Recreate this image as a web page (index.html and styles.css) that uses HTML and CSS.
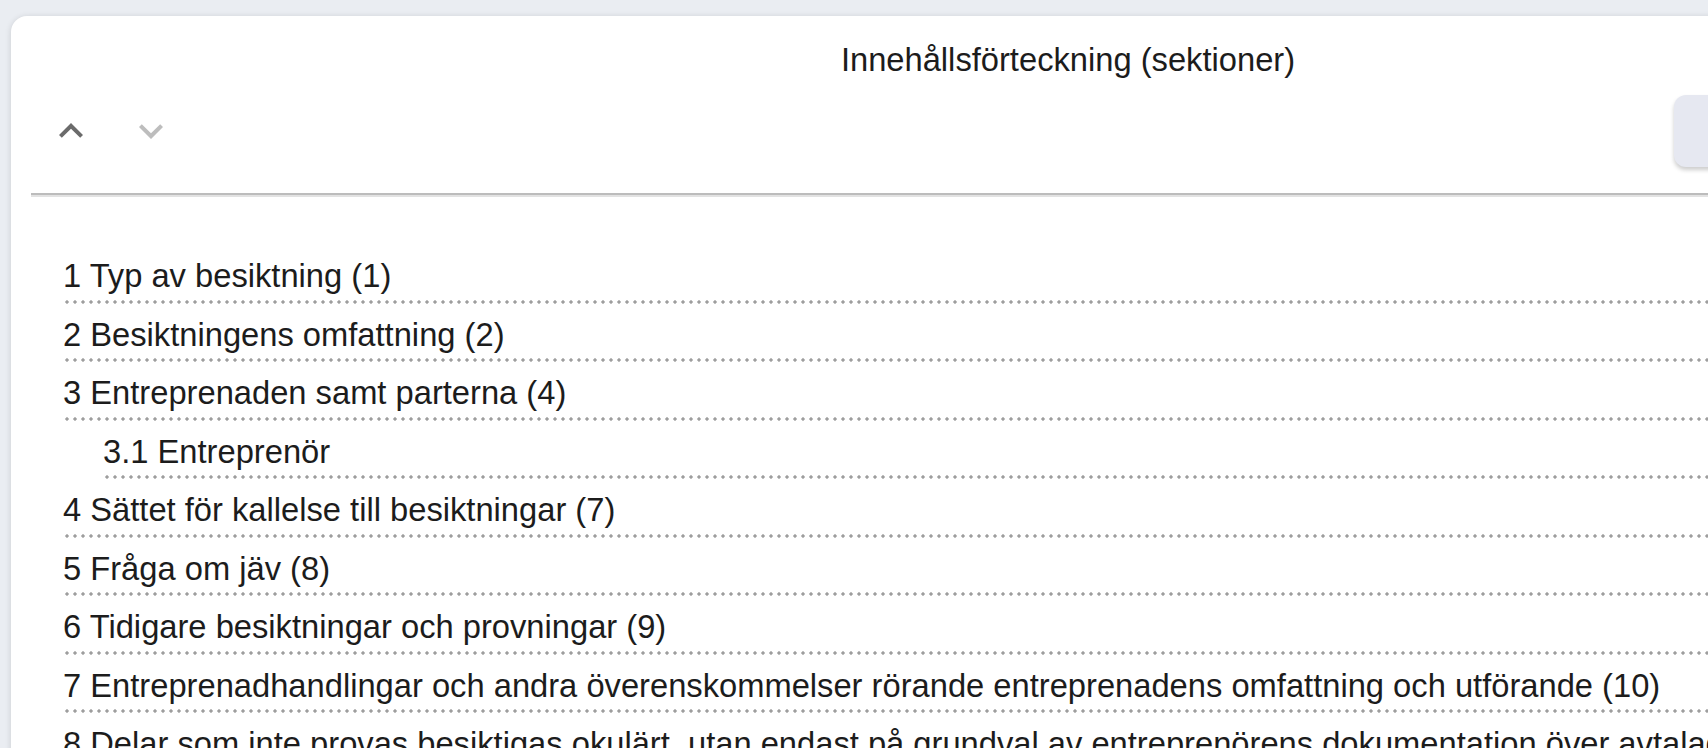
FILE: index.html
```html
<!DOCTYPE html>
<html lang="sv">
<head>
<meta charset="utf-8">
<title>Innehållsförteckning</title>
<link rel="stylesheet" href="styles.css">
</head>
<body>
<div class="card">
  <header class="head">
    <h1 class="title">Innehållsförteckning (sektioner)</h1>
    <div class="toolbar">
      <button class="icon-btn" type="button" aria-label="Upp">
        <svg class="icon up" viewBox="0 0 24 24" width="48" height="48"><path d="M12 8l-6 6 1.41 1.41L12 10.83l4.59 4.58L18 14z"/></svg>
      </button>
      <button class="icon-btn" type="button" aria-label="Ned">
        <svg class="icon down" viewBox="0 0 24 24" width="48" height="48"><path d="M16.59 8.59L12 13.17 7.41 8.59 6 10l6 6 6-6z"/></svg>
      </button>
      <div class="actions">
        <button class="action" type="button"></button>
        <button class="action" type="button"></button>
        <button class="action" type="button"></button>
      </div>
    </div>
  </header>
  <ul class="toc">
    <li class="row">1 Typ av besiktning (1)</li>
    <li class="row">2 Besiktningens omfattning (2)</li>
    <li class="row">3 Entreprenaden samt parterna (4)</li>
    <li class="row sub">3.1 Entreprenör</li>
    <li class="row">4 Sättet för kallelse till besiktningar (7)</li>
    <li class="row">5 Fråga om jäv (8)</li>
    <li class="row">6 Tidigare besiktningar och provningar (9)</li>
    <li class="row">7 Entreprenadhandlingar och andra överenskommelser rörande entreprenadens omfattning och utförande (10)</li>
    <li class="row">8 Delar som inte provas besiktigas okulärt, utan endast på grundval av entreprenörens dokumentation över avtalade kontroller (11)</li>
    <li class="row">9 Besiktningens genomförande (12)</li>
  </ul>
</div>
</body>
</html>
```

FILE: styles.css
```css
html, body {
  margin: 0;
  padding: 0;
  overflow: hidden;
  height: 100%;
}
body {
  background: #eaedf2;
  font-family: "Liberation Sans", Arial, sans-serif;
  color: #1c1c1c;
  padding: 16px 0 0 11px;
  box-sizing: border-box;
}
.card {
  width: 2114px;
  min-height: 900px;
  background: #fff;
  border-radius: 16px;
  box-shadow: 0 1px 6px rgba(0, 0, 0, 0.14);
  padding: 25px 20px 0;
  box-sizing: border-box;
}
.head {
  border-bottom: 2px solid #bcbcbc;
  box-shadow: 0 2px 0 #e2e2e2;
  padding-bottom: 22px;
}
.title {
  margin: 0;
  font-size: 32.7px;
  font-weight: 400;
  line-height: 37px;
  text-align: center;
  color: #1c1c1c;
}
.toolbar {
  display: flex;
  align-items: center;
  margin-top: 13px;
  height: 80px;
}
.icon-btn {
  width: 80px;
  height: 80px;
  border: 0;
  padding: 0;
  background: transparent;
  display: flex;
  align-items: center;
  justify-content: center;
}
.icon { display: block; }
.icon.up { fill: #6b6b6b; }
.icon.down { fill: #bdbdbd; }
.actions {
  margin-left: auto;
  display: flex;
  gap: 19px;
}
.action {
  width: 131px;
  height: 72px;
  border: 0;
  border-radius: 12px;
  background: #e6e8f1;
  box-shadow: 0 3px 4px rgba(0, 0, 0, 0.2);
}
.toc {
  list-style: none;
  margin: 50px 0 0;
  padding: 0 0 0 32px;
}
.row {
  font-size: 32.7px;
  line-height: 37px;
  padding: 12px 0 9.5px;
  white-space: nowrap;
  background-image: radial-gradient(circle, #9e9e9e 1.4px, rgba(158, 158, 158, 0) 1.9px);
  background-size: 8px 4px;
  background-repeat: repeat-x;
  background-position: 0 100%;
}
.row.sub {
  margin-left: 40px;
}
```
